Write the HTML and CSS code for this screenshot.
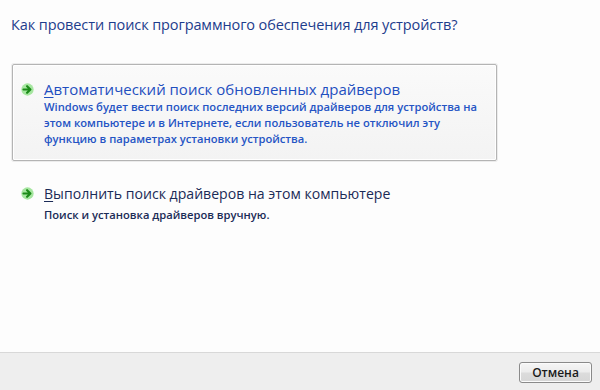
FILE: index.html
```html
<!DOCTYPE html>
<html lang="ru">
<head>
<meta charset="utf-8">
<link rel="stylesheet" href="styles.css">
</head>
<body>
<div class="dialog">
  <main class="content">
    <h1 class="title">Как провести поиск программного обеспечения для устройств?</h1>
    <div class="options">
      <div class="cmd cmd-hover">
        <svg class="arrow" viewBox="0 0 12 12" width="13" height="13"><circle cx="6" cy="6" r="5.7" fill="#a6e6a0"/><path d="M2.3 6h6.1M5.6 2.9L8.7 6 5.6 9.1" fill="none" stroke="#1b8a18" stroke-width="2" stroke-linecap="round" stroke-linejoin="round"/></svg>
        <div class="cmd-text">
          <div class="cmd-head"><u>А</u>втоматический поиск обновленных драйверов</div>
          <div class="cmd-desc">Windows будет вести поиск последних версий драйверов для устройства на этом компьютере и в Интернете, если пользователь не отключил эту функцию в параметрах установки устройства.</div>
        </div>
      </div>
      <div class="cmd cmd-plain">
        <svg class="arrow" viewBox="0 0 12 12" width="13" height="13"><circle cx="6" cy="6" r="5.7" fill="#a6e6a0"/><path d="M2.3 6h6.1M5.6 2.9L8.7 6 5.6 9.1" fill="none" stroke="#1b8a18" stroke-width="2" stroke-linecap="round" stroke-linejoin="round"/></svg>
        <div class="cmd-text">
          <div class="cmd-head small dark"><u>В</u>ыполнить поиск драйверов на этом компьютере</div>
          <div class="cmd-desc dark">Поиск и установка драйверов вручную.</div>
        </div>
      </div>
    </div>
  </main>
  <footer class="footer">
    <button class="btn">Отмена</button>
  </footer>
</div>
</body>
</html>
```
FILE: styles.css
```css
html, body {
  margin: 0;
  padding: 0;
  width: 600px;
  height: 390px;
  overflow: hidden;
  background: #fdfdfd;
  font-family: "Open Sans", "Noto Sans", sans-serif;
}
.dialog {
  display: flex;
  flex-direction: column;
  height: 390px;
}
.content {
  flex: 1;
  padding: 15px 0 0 11px;
}
.title {
  margin: 0;
  font-size: 14.5px;
  font-weight: 400;
  color: #1d3c8c;
  line-height: 20px;
  letter-spacing: -0.1px;
}
.options {
  display: flex;
  flex-direction: column;
  gap: 7px;
  margin-top: 29px;
  margin-left: 1px;
  width: 485px;
}
.cmd {
  display: flex;
  align-items: flex-start;
  gap: 10px;
  padding: 15px 10px 13px 8px;
  border: 1px solid transparent;
  border-radius: 2px;
}
.cmd-hover {
  border-color: #b4b4b4;
  background: linear-gradient(#fafafa, #f3f3f3);
  box-shadow: 0 0 0 1px #ececec, inset 0 0 0 1px #ffffff;
}
.arrow {
  flex: none;
  margin-top: 3px;
}
.cmd-text {
  display: flex;
  flex-direction: column;
}
.cmd-head {
  font-size: 15px;
  line-height: 19px;
  color: #1f4fbf;
}
.cmd-head.small {
  font-size: 14.1px;
}
.cmd-head u {
  text-decoration: underline;
  text-underline-offset: 2px;
}
.cmd-desc {
  font-size: 11.2px;
  line-height: 16px;
  font-weight: 600;
  color: #2554c4;
  margin-top: 0;
}
.cmd-desc.dark {
  margin-top: 4px;
}
.dark {
  color: #1b2b57;
}
.footer {
  height: 37px;
  border-top: 1px solid #d8d8d8;
  background: #eeeeee;
  display: flex;
  justify-content: flex-end;
  align-items: center;
  padding-right: 8px;
}
.btn {
  width: 73px;
  height: 21px;
  margin-top: 1px;
  border: 1px solid #8a8a8a;
  border-radius: 3px;
  background: linear-gradient(#f6f6f6 0%, #ececec 48%, #dcdcdc 52%, #d6d6d6 100%);
  box-shadow: inset 0 0 0 1px #fbfbfb;
  font-family: "Open Sans", sans-serif;
  font-size: 12px;
  font-weight: 600;
  color: #1a1a1a;
  padding: 0;
}
```
